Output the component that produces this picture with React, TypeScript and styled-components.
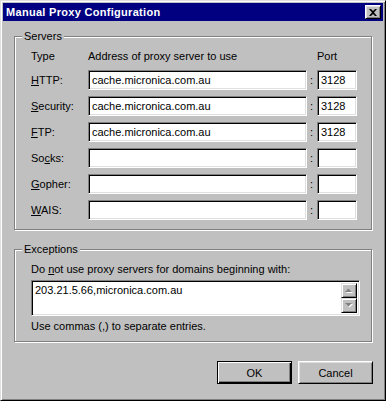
import React from 'react';
import styled, { createGlobalStyle } from 'styled-components';

const FACE = '#c0c0c0';
const LIGHT = '#dfdfdf';
const SHADOW = '#808080';
const DARK = '#000000';

const GlobalStyle = createGlobalStyle`
	html, body {
		margin: 0;
		padding: 0;
		background: ${FACE};
	}
	body {
		font-family: 'Liberation Sans', Arial, sans-serif;
		font-size: 11px;
		line-height: 13px;
		color: #000;
	}
	* {
		box-sizing: border-box;
	}
`;

const Window = styled.div`
	width: 386px;
	height: 401px;
	padding: 2px;
	background: ${FACE};
	border: 1px solid;
	border-color: ${LIGHT} ${DARK} ${DARK} ${LIGHT};
	box-shadow: inset 1px 1px 0 #fff, inset -1px -1px 0 ${SHADOW};
	display: flex;
	flex-direction: column;
`;

const TitleBar = styled.div`
	height: 18px;
	background: #000080;
	display: flex;
	align-items: center;
	justify-content: space-between;
	padding: 0 2px 0 3px;
`;

const TitleText = styled.span`
	color: #fff;
	font-weight: bold;
	font-size: 11px;
	letter-spacing: 0.3px;
`;

const CloseButton = styled.button`
	width: 16px;
	height: 14px;
	padding: 0;
	background: ${FACE};
	border: 1px solid;
	border-color: #fff ${DARK} ${DARK} #fff;
	box-shadow: inset 1px 1px 0 ${LIGHT}, inset -1px -1px 0 ${SHADOW};
	display: flex;
	align-items: center;
	justify-content: center;
`;

const Content = styled.div`
	padding: 15px 10px 0 11px;
	display: flex;
	flex-direction: column;
`;

const Group = styled.div<{ $gap?: number }>`
	position: relative;
	width: 358px;
	margin-top: ${(p) => p.$gap ?? 0}px;
	border: 1px solid ${SHADOW};
	box-shadow: inset 1px 1px 0 #fff, 1px 1px 0 #fff;
`;

const Caption = styled.span`
	position: absolute;
	top: -7px;
	left: 7px;
	padding: 0 2px;
	background: ${FACE};
	line-height: 13px;
`;

const ServerGrid = styled.div`
	display: grid;
	grid-template-columns: 57px 219px 10px 40px;
	grid-template-rows: 14px repeat(6, 20px);
	row-gap: 6px;
	align-items: center;
	padding: 13px 0 9px 16px;
`;

const HeaderCell = styled.span`
	align-self: start;
`;

const Label = styled.span``;

const Key = styled.span`
	text-decoration: underline;
	text-underline-offset: 1px;
`;

const Colon = styled.span`
	text-align: center;
	padding-right: 1px;
`;

const Field = styled.div`
	height: 20px;
	background: #fff;
	border: 1px solid;
	border-color: ${SHADOW} #fff #fff ${SHADOW};
	box-shadow: inset 1px 1px 0 ${DARK}, inset -1px -1px 0 ${LIGHT};
	padding: 0 2px 0 3px;
	display: flex;
	align-items: center;
	white-space: nowrap;
	overflow: hidden;
`;

const ExceptionsBody = styled.div`
	display: flex;
	flex-direction: column;
	align-items: flex-start;
	padding: 13px 0 8px 16px;
`;

const TextArea = styled.div`
	width: 329px;
	height: 36px;
	margin: 4px 0;
	background: #fff;
	border: 1px solid;
	border-color: ${SHADOW} #fff #fff ${SHADOW};
	box-shadow: inset 1px 1px 0 ${DARK}, inset -1px -1px 0 ${LIGHT};
	padding: 2px;
	display: flex;
`;

const AreaText = styled.div`
	flex: 1;
	padding: 1px 0 0 1px;
`;

const ScrollColumn = styled.div`
	width: 16px;
	display: flex;
	flex-direction: column;
`;

const ScrollButton = styled.div`
	width: 16px;
	height: 16px;
	background: ${FACE};
	border: 1px solid;
	border-color: ${LIGHT} ${DARK} ${DARK} ${LIGHT};
	box-shadow: inset 1px 1px 0 #fff, inset -1px -1px 0 ${SHADOW};
	display: flex;
	align-items: center;
	justify-content: center;
`;

const ButtonRow = styled.div`
	display: flex;
	justify-content: flex-end;
	gap: 6px;
	margin-top: 19px;
`;

const PushButton = styled.button<{ $default?: boolean }>`
	width: 75px;
	height: 23px;
	padding: 0;
	font-family: inherit;
	font-size: 11px;
	color: #000;
	background: ${FACE};
	border: 1px solid;
	border-color: ${(p) => (p.$default ? `${DARK}` : `#fff ${DARK} ${DARK} #fff`)};
	box-shadow: ${(p) =>
		p.$default
			? `inset 1px 1px 0 #fff, inset -1px -1px 0 ${DARK}, inset -2px -2px 0 ${SHADOW}`
			: `inset 1px 1px 0 ${LIGHT}, inset -1px -1px 0 ${SHADOW}`};
`;

const CloseGlyph = () => (
	<svg width="8" height="7" viewBox="0 0 8 7">
		<path d="M0 0h2l2 2 2-2h2L5 3.5 8 7H6L4 5 2 7H0l3-3.5z" fill="#000" />
	</svg>
);

const Arrow: React.FC<{ up?: boolean }> = ({ up }) => {
	const pts = up ? '0,4 7,4 3.5,0.5' : '0,0 7,0 3.5,3.5';
	return (
		<svg width="8" height="5" viewBox="0 0 8 5">
			<polygon points={pts} fill="#fff" transform="translate(1 1)" />
			<polygon points={pts} fill={SHADOW} />
		</svg>
	);
};

const servers = [
	{ pre: '', key: 'H', post: 'TTP:', host: 'cache.micronica.com.au', port: '3128' },
	{ pre: '', key: 'S', post: 'ecurity:', host: 'cache.micronica.com.au', port: '3128' },
	{ pre: '', key: 'F', post: 'TP:', host: 'cache.micronica.com.au', port: '3128' },
	{ pre: 'So', key: 'c', post: 'ks:', host: '', port: '' },
	{ pre: '', key: 'G', post: 'opher:', host: '', port: '' },
	{ pre: '', key: 'W', post: 'AIS:', host: '', port: '' },
];

export default function App() {
	return (
		<>
			<GlobalStyle />
			<Window>
				<TitleBar>
					<TitleText>Manual Proxy Configuration</TitleText>
					<CloseButton aria-label="Close">
						<CloseGlyph />
					</CloseButton>
				</TitleBar>
				<Content>
					<Group>
						<Caption>Servers</Caption>
						<ServerGrid>
							<HeaderCell>Type</HeaderCell>
							<HeaderCell>Address of proxy server to use</HeaderCell>
							<HeaderCell />
							<HeaderCell>Port</HeaderCell>
							{servers.map((s) => (
								<React.Fragment key={s.key}>
									<Label>
										{s.pre}
										<Key>{s.key}</Key>
										{s.post}
									</Label>
									<Field>{s.host}</Field>
									<Colon>:</Colon>
									<Field>{s.port}</Field>
								</React.Fragment>
							))}
						</ServerGrid>
					</Group>
					<Group $gap={19}>
						<Caption>Exceptions</Caption>
						<ExceptionsBody>
							<span>
								Do <Key>n</Key>ot use proxy servers for domains beginning with:
							</span>
							<TextArea>
								<AreaText>203.21.5.66,micronica.com.au</AreaText>
								<ScrollColumn>
									<ScrollButton>
										<Arrow up />
									</ScrollButton>
									<ScrollButton>
										<Arrow />
									</ScrollButton>
								</ScrollColumn>
							</TextArea>
							<span>Use commas (,) to separate entries.</span>
						</ExceptionsBody>
					</Group>
					<ButtonRow>
						<PushButton $default>OK</PushButton>
						<PushButton>Cancel</PushButton>
					</ButtonRow>
				</Content>
			</Window>
		</>
	);
}
